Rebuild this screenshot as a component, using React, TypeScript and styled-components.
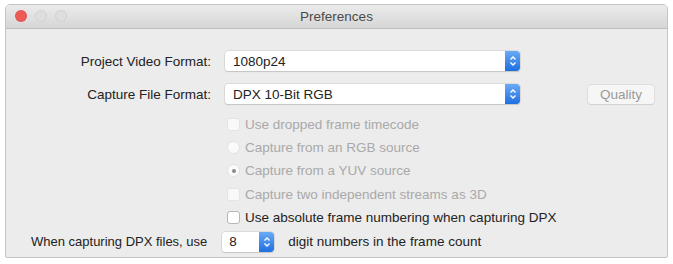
import React, { FC } from 'react';
import styled, { createGlobalStyle } from 'styled-components';

const GlobalStyle = createGlobalStyle`
  html, body {
    margin: 0;
    padding: 0;
    background: #ffffff;
    font-family: 'Liberation Sans', Arial, sans-serif;
  }
`;

const Arrows: FC = () => (
  <svg width="8" height="12" viewBox="0 0 8 12">
    <path d="M1.5 4.5 L4 2 L6.5 4.5 M1.5 7.5 L4 10 L6.5 7.5" fill="none" stroke="#fff" strokeWidth="1.4" />
  </svg>
);

type SelectProps = { value: string; width: number };

const Select: FC<SelectProps> = ({ value, width }) => (
  <SelectBox style={{ width }}>
    <SelectValue>{value}</SelectValue>
    <Stepper>
      <Arrows />
    </Stepper>
  </SelectBox>
);

type OptionProps = { label: string; kind: 'check' | 'radio'; disabled?: boolean; checked?: boolean };

const Option: FC<OptionProps> = ({ label, kind, disabled, checked }) => (
  <OptionRow $disabled={disabled}>
    {kind === 'check' ? <CheckBox $disabled={disabled} /> : <Radio>{checked && <Dot />}</Radio>}
    <span>{label}</span>
  </OptionRow>
);

export default function App() {
  return (
    <>
      <GlobalStyle />
      <Window>
        <TitleBar>
          <Lights>
            <Light $color="#ee5a55" />
            <Light $color="#dedede" />
            <Light $color="#dedede" />
          </Lights>
          <Title>Preferences</Title>
        </TitleBar>
        <Body>
          <FormRow>
            <Label>Project Video Format:</Label>
            <Select value="1080p24" width={295} />
          </FormRow>
          <FormRow>
            <Label>Capture File Format:</Label>
            <Select value="DPX 10-Bit RGB" width={295} />
            <QualityButton>Quality</QualityButton>
          </FormRow>
          <Options>
            <Option kind="check" label="Use dropped frame timecode" disabled />
            <Option kind="radio" label="Capture from an RGB source" disabled />
            <Option kind="radio" label="Capture from a YUV source" disabled checked />
            <Option kind="check" label="Capture two independent streams as 3D" disabled />
            <Option kind="check" label="Use absolute frame numbering when capturing DPX" />
          </Options>
          <DigitsRow>
            <DigitsLabel>When capturing DPX files, use</DigitsLabel>
            <NumberBox>
              <NumberValue>8</NumberValue>
              <Stepper>
                <Arrows />
              </Stepper>
            </NumberBox>
            <DigitsTail>digit numbers in the frame count</DigitsTail>
          </DigitsRow>
        </Body>
      </Window>
    </>
  );
}

const Window = styled.div`
  margin: 4px 5px 0 5px;
  width: 663px;
  height: 254px;
  box-sizing: border-box;
  border: 1px solid #c4c4c4;
  border-radius: 5px 5px 2px 2px;
  background: #ececec;
  overflow: hidden;
  display: flex;
  flex-direction: column;
`;

const TitleBar = styled.div`
  height: 23px;
  flex: none;
  position: relative;
  display: flex;
  align-items: center;
  justify-content: center;
  background: linear-gradient(#ebebeb, #d6d6d6);
  border-bottom: 1px solid #bdbdbd;
`;

const Lights = styled.div`
  position: absolute;
  left: 9px;
  top: 5px;
  display: flex;
  gap: 8px;
`;

const Light = styled.div<{ $color: string }>`
  width: 12px;
  height: 12px;
  border-radius: 50%;
  background: ${(p) => p.$color};
  border: 1px solid rgba(0, 0, 0, 0.05);
  box-sizing: border-box;
`;

const Title = styled.div`
  font-size: 13.5px;
  color: #4a4a4a;
`;

const Body = styled.div`
  flex: 1;
  display: flex;
  flex-direction: column;
  padding-top: 22px;
  font-size: 13.5px;
  color: #222;
`;

const FormRow = styled.div`
  display: flex;
  align-items: center;
  height: 20px;
  margin-bottom: 13px;
`;

const Label = styled.div`
  width: 205px;
  text-align: right;
  margin-right: 14px;
`;

const SelectBox = styled.div`
  height: 20px;
  box-sizing: border-box;
  display: flex;
  align-items: stretch;
  background: #fff;
  border-radius: 3px;
  box-shadow: 0 0 0 0.5px #c8c8c8, 0 1px 1px rgba(0, 0, 0, 0.18);
  overflow: hidden;
`;

const SelectValue = styled.div`
  flex: 1;
  padding-left: 8px;
  display: flex;
  align-items: center;
`;

const Stepper = styled.div`
  width: 15px;
  flex: none;
  display: flex;
  align-items: center;
  justify-content: center;
  background: linear-gradient(#6aaaf6, #1e6fe0);
  border-radius: 0 3px 3px 0;
`;

const QualityButton = styled.div`
  margin-left: 68px;
  width: 66px;
  height: 19px;
  display: flex;
  align-items: center;
  justify-content: center;
  background: #f6f6f6;
  border-radius: 3px;
  box-shadow: 0 0 0 0.5px #d0d0d0, 0 1px 1px rgba(0, 0, 0, 0.1);
  color: #9a9a9a;
`;

const Options = styled.div`
  display: flex;
  flex-direction: column;
  padding-left: 221px;
  margin-top: -4px;
`;

const OptionRow = styled.div<{ $disabled?: boolean }>`
  display: flex;
  align-items: center;
  gap: 5px;
  height: 23.2px;
  color: ${(p) => (p.$disabled ? '#a9a9a9' : '#222')};
`;

const CheckBox = styled.div<{ $disabled?: boolean }>`
  width: 13px;
  height: 13px;
  box-sizing: border-box;
  border-radius: 3px;
  background: #fff;
  border: 1px solid ${(p) => (p.$disabled ? '#e2e2e2' : '#b8b8b8')};
  opacity: ${(p) => (p.$disabled ? 0.7 : 1)};
`;

const Radio = styled.div`
  width: 13px;
  height: 13px;
  box-sizing: border-box;
  border-radius: 50%;
  background: #fafafa;
  border: 1px solid #e2e2e2;
  display: flex;
  align-items: center;
  justify-content: center;
`;

const Dot = styled.div`
  width: 4px;
  height: 4px;
  border-radius: 50%;
  background: #8a8a8a;
`;

const DigitsRow = styled.div`
  display: flex;
  align-items: center;
  padding-left: 25px;
  margin-top: 3px;
  height: 20px;
`;

const DigitsLabel = styled.span`
  font-size: 13px;
  margin-right: 15px;
`;

const DigitsTail = styled.span`
  margin-left: 14px;
`;

const NumberBox = styled.div`
  width: 52px;
  height: 20px;
  display: flex;
  background: #fff;
  border-radius: 3px;
  box-shadow: 0 0 0 0.5px #c8c8c8, 0 1px 1px rgba(0, 0, 0, 0.15);
  overflow: hidden;
`;

const NumberValue = styled.div`
  flex: 1;
  padding-left: 7px;
  display: flex;
  align-items: center;
`;
